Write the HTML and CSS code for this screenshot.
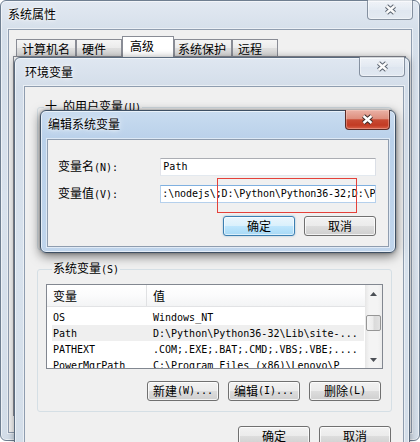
FILE: index.html
```html
<!DOCTYPE html>
<html lang="zh-CN">
<head>
<meta charset="utf-8">
<title>编辑系统变量</title>
<link rel="stylesheet" href="styles.css">
</head>
<body>
<div class="desk">

  <section class="win outer">
    <header class="bar">
      <span class="title">系统属性</span>
      <span class="close"><svg width="13" height="11" viewBox="0 0 13 11"><path d="M2.5 2L10.5 9M10.5 2L2.5 9" stroke="#5b6470" stroke-width="4.4"/><path d="M2.5 2L10.5 9M10.5 2L2.5 9" stroke="#fbfbfb" stroke-width="2.4"/></svg></span>
    </header>
    <div class="client">
      <nav class="tabs">
        <span class="tab t1">计算机名</span>
        <span class="tab t2">硬件</span>
        <span class="tab t3 sel">高级</span>
        <span class="tab t4">系统保护</span>
        <span class="tab t5">远程</span>
      </nav>
      <div class="page"></div>
    </div>
  </section>

  <section class="win env">
    <header class="bar">
      <span class="title">环境变量</span>
      <span class="close"><svg width="13" height="11" viewBox="0 0 13 11"><path d="M2.5 2L10.5 9M10.5 2L2.5 9" stroke="#5b6470" stroke-width="4.4"/><path d="M2.5 2L10.5 9M10.5 2L2.5 9" stroke="#fbfbfb" stroke-width="2.4"/></svg></span>
    </header>
    <div class="client">
      <fieldset class="group user"><legend>十<span class="m"> </span>的用户变量<span class="m">(U)</span></legend></fieldset>
      <fieldset class="group sys"><legend>系统变量<span class="m">(S)</span></legend>
        <div class="list">
          <div class="list-main">
            <div class="lhead"><span class="c1">变量</span><span class="c2">值</span></div>
            <div class="rows">
              <div class="row"><span class="c1 m">OS</span><span class="c2 m">Windows_NT</span></div>
              <div class="row hl"><span class="c1 m">Path</span><span class="c2 m">D:\Python\Python36-32\Lib\site-...</span></div>
              <div class="row"><span class="c1 m">PATHEXT</span><span class="c2 m">.COM;.EXE;.BAT;.CMD;.VBS;.VBE;....</span></div>
              <div class="row"><span class="c1 m">PowerMgrPath</span><span class="c2 m">C:\Program Files (x86)\Lenovo\P</span></div>
            </div>
          </div>
          <div class="vscroll">
            <span class="sb-btn"><svg width="7" height="4" viewBox="0 0 7 4"><path d="M3.5 0L7 4H0Z" fill="#4b4f55"/></svg></span>
            <span class="sb-track"><span class="thumb"></span></span>
            <span class="sb-btn"><svg width="7" height="4" viewBox="0 0 7 4"><path d="M0 0H7L3.5 4Z" fill="#4b4f55"/></svg></span>
          </div>
        </div>
        <div class="btns">
          <span class="btn">新建<span class="m">(W)...</span></span>
          <span class="btn">编辑<span class="m">(I)...</span></span>
          <span class="btn">删除<span class="m">(L)</span></span>
        </div>
      </fieldset>
      <div class="btns foot">
        <span class="btn">确定</span>
        <span class="btn">取消</span>
      </div>
    </div>
  </section>

  <section class="win edit">
    <header class="bar">
      <span class="title">编辑系统变量</span>
      <span class="close red"><svg width="13" height="11" viewBox="0 0 13 11"><path d="M2.5 2L10.5 9M10.5 2L2.5 9" stroke="#3a2a28" stroke-width="4.4"/><path d="M2.5 2L10.5 9M10.5 2L2.5 9" stroke="#ffffff" stroke-width="2.4"/></svg></span>
    </header>
    <div class="client eclient">
      <div class="frow"><span class="flabel">变量名<span class="m">(N):</span></span><span class="field m">Path</span></div>
      <div class="frow"><span class="flabel">变量值<span class="m">(V):</span></span><span class="field focus m">:\nodejs\;D:\Python\Python36-32;D:\P</span></div>
      <div class="ebtns">
        <span class="btn def">确定</span>
        <span class="btn">取消</span>
      </div>
    </div>
  </section>

  <div class="mark"></div>
</div>
</body>
</html>
```

FILE: styles.css
```css
* { box-sizing: border-box; margin: 0; padding: 0; }
html, body { width: 420px; height: 442px; overflow: hidden; }
body {
  background: #ffffff;
  font-family: "Noto Sans CJK SC", sans-serif;
  font-size: 12px;
  line-height: 12px;
  color: #000;
}
.m { font-family: "DejaVu Sans Mono", monospace; font-size: 10px; }

.desk { position: relative; width: 420px; height: 442px; overflow: hidden; }

/* ---------- window frames ---------- */
.win {
  position: absolute;
  display: flex;
  flex-direction: column;
  border: 1px solid #5a6b7e;
  border-radius: 6px 6px 0 0;
}
.bar {
  flex: none;
  height: 28px;
  display: flex;
  justify-content: space-between;
  align-items: flex-start;
}
.title {
  margin: 7px 0 0 1px;
  text-shadow: 0 0 3px #fff, 0 0 7px rgba(255,255,255,.9);
}
.close {
  width: 46px;
  height: 20px;
  margin: -1px -1px 0 0;
  display: flex;
  align-items: center;
  justify-content: center;
  border: 1px solid rgba(70,85,105,.6);
  border-top: none;
  border-radius: 0 0 4px 4px;
  background: linear-gradient(rgba(255,255,255,.5), rgba(255,255,255,.2) 50%, rgba(255,255,255,.05) 51%, rgba(255,255,255,.25));
  box-shadow: inset 0 0 0 1px rgba(255,255,255,.45);
}
.close.red {
  width: 45px;
  border: 1px solid #5b2b26;
  border-top: none;
  background: linear-gradient(#eab2a6 0, #de8f7e 45%, #c84a33 52%, #c23b24 80%, #d8614a 100%);
  box-shadow: inset 0 0 0 1px rgba(255,220,210,.35);
}
.client {
  flex: 1;
  background: #f0f0f0;
  border: 1px solid #8f9daf;
  box-shadow: 0 0 0 1px rgba(255,255,255,.5);
  min-height: 0;
}

/* outer window: 系统属性 */
.outer {
  left: 0; top: 0;
  width: 420px; height: 441px;
  border-radius: 6px;
  padding: 0 7px 7px 7px;
  background: linear-gradient(#e2e9f2 0, #d5dfea 30px, #d9e2ed 200px, #d3dde8 100%);
  box-shadow: inset 0 0 0 1px rgba(255,255,255,.55);
  border-color: #6f7f91;
}
.outer .title { margin-left: 0; }
.tabs {
  display: flex;
  align-items: flex-end;
  height: 20px;
  margin: 6px 0 0 7px;
}
.tab {
  height: 17px;
  padding: 3px 0 0 5px;
  border: 1px solid #898c95;
  border-bottom: none;
  background: linear-gradient(#f5f5f5, #ebebeb 50%, #dedede 51%, #d6d6d6);
  white-space: nowrap;
}
.tab.sel { height: 21px; margin-bottom: -1px; background: #fff; padding-left: 7px; position: relative; }
.t1 { width: 60px; }
.t2 { width: 46px; }
.t3 { width: 52px; }
.t4 { width: 58px; padding-left: 3px; }
.t5 { width: 46px; }
.page {
  height: 360px;
  margin: 0 5px 0 4px;
  border: 1px solid #898c95;
  background: #fff;
}

/* env window: 环境变量 */
.env {
  left: 14px; top: 57px;
  width: 396px; height: 420px;
  padding: 0 5px 0 9px;
  background: linear-gradient(#dfe7f1 0, #d3dde9 30px, #d8e2ed 200px, #d3dde8 100%);
  box-shadow: inset 0 0 0 1px rgba(255,255,255,.55), 0 0 7px rgba(0,0,0,.35);
}
.env .title { margin-top: 8px; }

.group {
  border: 1px solid #d5dfe5;
  border-radius: 3px;
  min-width: 0;
}
.group legend {
  margin-left: 6px;
  padding: 0 1px;
  line-height: 12px;
}
.user { height: 150px; margin: 13px 11px 0 12px; }
.sys { margin: 12px 11px 0 12px; padding: 0 8px 10px 8px; }

.list {
  display: flex;
  height: 85px;
  margin-top: 8px;
  border: 1px solid #828790;
  background: #fff;
}
.list-main { flex: 1; min-width: 0; overflow: hidden; }
.lhead {
  display: flex;
  height: 22px;
  border-bottom: 1px solid #e2e3e5;
  background: linear-gradient(#ffffff, #fbfbfc 50%, #f3f4f5);
}
.lhead .c1 { width: 100px; padding-left: 6px; line-height: 21px; border-right: 1px solid #e0e1e3; }
.lhead .c2 { padding-left: 6px; line-height: 21px; }
.rows { padding: 2px 1px 0 5px; }
.row { display: flex; height: 16px; line-height: 17px; white-space: pre; }
.row.hl { background: #efefef; }
.row .c1 { width: 95px; padding-left: 1px; }
.row .c2 { padding-left: 6px; }

.vscroll {
  width: 17px;
  flex: none;
  display: flex;
  flex-direction: column;
  background: linear-gradient(90deg, #e6e6e6, #f4f4f4 25%, #f4f4f4 75%, #ececec);
}
.sb-btn { height: 17px; display: flex; align-items: center; justify-content: center; }
.sb-track { flex: 1; }
.thumb {
  display: block;
  height: 16px;
  margin: 13px 1px 0 1px;
  border: 1px solid #969696;
  border-radius: 2px;
  background: linear-gradient(90deg, #f5f5f5, #ececec 45%, #dadada 55%, #e2e2e2);
}

.btns {
  display: flex;
  justify-content: flex-end;
  gap: 9px;
  margin-top: 12px;
  padding-right: 2px;
}
.foot { margin: 14px 12px 0 0; padding-right: 0; }

.btn {
  width: 72px;
  height: 20px;
  display: flex;
  align-items: center;
  justify-content: center;
  border: 1px solid #707070;
  border-radius: 3px;
  background: linear-gradient(#f2f2f2, #ebebeb 50%, #dddddd 51%, #cfcfcf);
  box-shadow: inset 0 0 0 1px rgba(255,255,255,.75);
  white-space: pre;
}
.btn.def {
  border-color: #3c7fb1;
  background: linear-gradient(#eaf6fd, #d9f0fc 50%, #bee6fd 51%, #a7d9f5);
  box-shadow: inset 0 0 0 1px rgba(255,255,255,.6), 0 0 2px rgba(60,127,177,.5);
}

/* edit dialog: 编辑系统变量 */
.edit {
  left: 40px; top: 110px;
  width: 356px; height: 143px;
  border-radius: 6px;
  padding: 0 6px 5px 6px;
  border-color: #3e5064;
  background: linear-gradient(#c9dcf0 0, #bad1ea 28px, #c0d5ec 100%);
  box-shadow: inset 0 0 0 1px rgba(255,255,255,.6), 0 3px 11px rgba(0,0,0,.55), 0 0 3px rgba(0,0,0,.3);
}
.eclient { padding: 18px 12px 0 10px; }
.frow { display: flex; align-items: center; height: 18px; }
.frow + .frow { margin-top: 9px; }
.flabel { width: 103px; white-space: pre; }
.field {
  width: 217px;
  height: 18px;
  padding-left: 2px;
  line-height: 16px;
  border: 1px solid;
  border-color: #abadb3 #dbdfe6 #e3e9ef #e2e3ea;
  background: #fff;
  overflow: hidden;
  white-space: pre;
}
.field.focus {
  padding-left: 1px;
  letter-spacing: -0.1px;
  border-color: #7fb0e0 #b5d0ec #b5d0ec #b5d0ec;
}
.ebtns { display: flex; justify-content: flex-end; gap: 9px; margin-top: 13px; }

/* red annotation box drawn over the screenshot */
.mark {
  position: absolute;
  left: 217px; top: 178px;
  width: 140px; height: 35px;
  border: 1px solid #e4413a;
}
```
